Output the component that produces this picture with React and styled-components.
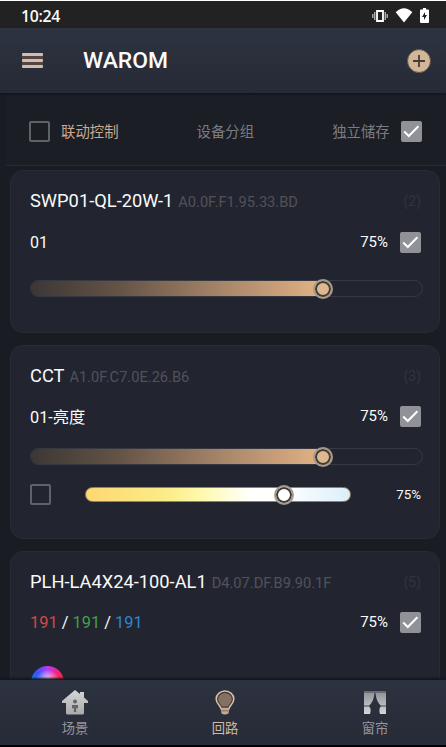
import React from 'react';
import styled, { createGlobalStyle } from 'styled-components';

const Global = createGlobalStyle`
  *{box-sizing:border-box}
  body{margin:0;background:#181b21;overflow:hidden}
`;
const Screen = styled.div`
  width:446px;height:747px;display:flex;flex-direction:column;overflow:hidden;
  background:#191c22;color:#fafafa;border-bottom:2px solid #020202;
  font-family:Roboto,"Noto Sans CJK SC",sans-serif;
`;
const StatusBar = styled.div`
  height:28px;flex:none;display:flex;align-items:center;justify-content:space-between;
  padding:2px 17px 0 21px;background:#222222;border-top:1px solid #fff;
`;
const Clock = styled.span`font:500 15.8px/20px "Open Sans",sans-serif;letter-spacing:-.3px;font-weight:600;`;
const StatusIcons = styled.div`display:flex;align-items:center;gap:7px;`;
const AppBar = styled.header`
  height:65px;flex:none;display:flex;align-items:center;padding:0 15.5px 0 22px;
  background:linear-gradient(#2d3340,#262a36);box-shadow:0 1px 2px #10121a;z-index:1;
`;
const MenuLines = styled.div`
  width:21px;height:15px;display:flex;flex-direction:column;justify-content:space-between;background:#56453e;
`;
const MenuLine = styled.i`height:2.6px;background:#cdbfb5;border-radius:1px;`;
const Title = styled.h1`margin:0 auto 0 40px;font-size:22.9px;line-height:30px;font-weight:500;`;
const AddButton = styled.button`
  width:24px;height:24px;padding:0;border:1px solid #655348;border-radius:50%;background:#d1b797;
  display:grid;place-items:center;
`;
const Filters = styled.div`
  height:73px;flex:none;margin:0 0 4px 6px;padding:5px 24px 0 23px;display:flex;align-items:center;
  background:#1b1e25;border-bottom:1px solid #282c32;
`;
const FilterLabel = styled.span`
  font-size:14.4px;line-height:20px;padding-top:2px;color:${p => p.$active ? '#c9ab93' : '#7b7c81'};
  margin-left:${p => p.$left}px;
`;
const Box = styled.span`
  width:21px;height:21px;flex:none;border-radius:2px;display:grid;place-items:center;
  background:${p => p.$on ? '#919297' : 'transparent'};
  border:${p => p.$on ? 0 : '2px solid #606268'};
  margin-left:${p => p.$left || 0}px;
`;
const List = styled.main`flex:1;min-height:0;overflow:hidden;padding:0 6px 0 10px;display:flex;flex-direction:column;gap:12px;`;
const Card = styled.section`
  height:${p => p.$h}px;flex:none;padding:16px 18px 0 19px;border:1px solid #282b32;border-radius:13px;background:#22252f;
`;
const Head = styled.div`height:28px;display:flex;align-items:center;`;
const Name = styled.h2`margin:0 5px 0 0;font-size:18.3px;font-weight:400;line-height:24px;white-space:nowrap;`;
const Address = styled.span`font-size:14.65px;line-height:20px;padding-top:2px;color:#50525a;white-space:nowrap;`;
const Count = styled.span`margin-left:auto;margin-right:0;font-size:14px;color:#31343d;`;
const Row = styled.div`height:${p => p.$h}px;display:flex;align-items:center;`;
const Channel = styled.span`font-size:${p => p.$size || 16}px;flex:1;`;
const Value = styled.span`font-size:${p => p.$small ? 13.3 : 15}px;margin-left:${p => p.$left || 0}px;`;
const Rgb = styled.span`color:${p => p.$c};`;
const Track = styled.div`
  height:17px;width:393px;border:1px solid #363941;border-radius:9px;margin-top:${p => p.$top}px;display:flex;align-items:center;
`;
const Fill = styled.div`
  width:292px;height:15px;border-radius:8px 0 0 8px;display:flex;align-items:center;justify-content:flex-end;
  background:linear-gradient(90deg,#3c3735,#645346 30%,#a68569 65%,#e3b385);
`;
const Knob = styled.span`
  width:20px;height:20px;flex:none;border-radius:50%;border:2px solid #a79a8c;
  background:${p => p.$bg};box-shadow:inset 0 0 0 2px #3f3b38;margin-right:${p => p.$over || 0}px;
`;
const TempRow = styled.div`height:21px;margin-top:19px;display:flex;align-items:center;`;
const TempTrack = styled.div`
  width:267px;height:15px;margin-left:34px;border-radius:8px;display:flex;align-items:center;padding-left:188px;
  background:linear-gradient(90deg,#fed772,#fbec87 30%,#fffab0 45%,#fffffa 61%,#fff 75%,#dceefa);
  border:1px solid #8b856e;
`;
const Wheel = styled.div`
  width:33px;height:33px;border-radius:50%;margin:18px 0 0 1px;
  background:radial-gradient(circle,#fff 0,transparent 55%),conic-gradient(#b43cf5,#ff2070 50deg,#ff3020 90deg,#ff0,#0f6,#0af 255deg,#2f55ff 310deg,#b43cf5);
`;
const Nav = styled.nav`
  height:65px;flex:none;display:grid;grid-template-columns:150px 150px 150px;background:linear-gradient(#2d3240,#272b37);
  box-shadow:0 -2px 2px #13161c;z-index:1;
`;
const Tab = styled.div`
  display:flex;flex-direction:column;align-items:center;padding-top:10px;color:${p => p.$active ? '#cfb9a5' : '#94969e'};
  font-size:13.3px;line-height:18px;gap:5px;
`;

const Check = () => (
  <svg width="21" height="21" viewBox="0 0 21 21" fill="none" stroke="#fff" strokeWidth="2"><path d="M3.2 10.5 7.8 15 17.4 5.2" /></svg>
);
const Checkbox = ({ on, left }) => <Box $on={on} $left={left}>{on && <Check />}</Box>;

const Vibrate = () => (
  <svg width="16" height="12" viewBox="0 0 16 12"><path d="M5 1h6v10H5z" fill="none" stroke="#fff" strokeWidth="1.8" /><path d="M2.7 2v8M13.3 2v8M.8 4v4M15.2 4v4" stroke="#aaa" strokeWidth="1.4" /></svg>
);
const Wifi = () => (
  <svg width="18" height="15" viewBox="0 0 18 15"><path d="M.7 4.2Q9-3.6 17.3 4.2L9 14.5Z" fill="#fff" /></svg>
);
const Battery = () => (
  <svg width="9" height="15" viewBox="0 0 9 15"><path d="M3 0h3v1.5h2q1 0 1 1V14q0 1-1 1H1q-1 0-1-1V2.500q0-1 1-1h2Z" fill="#fff" /><path d="M5 4 2 9h2v3l3-5H5Z" fill="#222" /></svg>
);
const Plus = () => (
  <svg width="12" height="12" viewBox="0 0 12 12"><path d="M6 0v12M0 6h12" stroke="#493c36" strokeWidth="1.8" /></svg>
);
const House = () => (
  <svg width="26" height="25" viewBox="0 0 26 25">
    <defs><linearGradient id="house" x2="0" y2="1"><stop stopColor="#d5d6d8" /><stop offset="1" stopColor="#aaa" /></linearGradient></defs>
    <path d="M13 0 18 4V2h4v5.500L26 11v2h-4v10q0 1.500-1.500 1.500h-15Q4 24.500 4 23V13H0v-2Z" fill="url(#house)" />
    <circle cx="13" cy="11.500" r="2" fill="#63656b" /><path d="M10 15h6v3.200h-1.800V22h-2.400v-3.800H10Z" fill="#63656b" />
  </svg>
);
const Bulb = () => (
  <svg width="20" height="25" viewBox="0 0 20 25">
    <path d="M6 18.500C5 15 1.200 13.500 1.200 9A8.800 8 0 0 1 18.800 9C18.800 13.500 15 15 14 18.500Z" fill="#39373c" stroke="#d9bea3" strokeWidth="1.600" />
    <path d="M6.800 16.500C6 14 3.200 12.500 3.200 9A6.800 6 0 0 1 16.800 9C16.800 12.500 14 14 13.200 16.500Z" fill="#857162" />
    <path d="M5.500 18h9l-1 5.500q-3.500 2-7 0Z" fill="#c5aa91" /><path d="M6.500 20.800h7" stroke="#7b685c" />
  </svg>
);
const Curtain = () => (
  <svg width="22" height="25" viewBox="0 0 22 25">
    <defs><linearGradient id="curtain" x2="0" y2="1"><stop stopColor="#92959a" /><stop offset="1" stopColor="#d5d6d8" /></linearGradient></defs>
    <path d="M0 2h22" stroke="#696c73" strokeWidth="2" />
    <path d="M0 3h10.500C10 9 8 13 5 16 7 18 7 21 6 24H0ZM22 3H11.500C12 9 14 13 17 16 15 18 15 21 16 24h6Z" fill="url(#curtain)" />
    <path d="M0 16h6M16 16h6" stroke="#444952" />
  </svg>
);

const Slider = ({ top }) => <Track $top={top}><Fill><Knob $bg="#dfb890" $over={-10} /></Fill></Track>;
const Header = ({ name, address, count }) => (
  <Head><Name>{name}</Name><Address>{address}</Address><Count>({count})</Count></Head>
);
const ChannelRow = ({ size, h = 52, children }) => (
  <Row $h={h}><Channel $size={size}>{children}</Channel><Value>75%</Value><Checkbox on left={12} /></Row>
);

export default function App() {
  return (
    <Screen>
      <Global />
      <StatusBar><Clock>10:24</Clock><StatusIcons><Vibrate /><Wifi /><Battery /></StatusIcons></StatusBar>
      <AppBar>
        <MenuLines><MenuLine /><MenuLine /><MenuLine /></MenuLines>
        <Title>WAROM</Title>
        <AddButton aria-label="Add"><Plus /></AddButton>
      </AppBar>
      <Filters>
        <Checkbox />
        <FilterLabel $active $left={11}>联动控制</FilterLabel>
        <FilterLabel $left={78}>设备分组</FilterLabel>
        <FilterLabel $left={78}>独立储存</FilterLabel>
        <Checkbox on left={11} />
      </Filters>
      <List>
        <Card $h={163}>
          <Header name="SWP01-QL-20W-1" address="A0.0F.F1.95.33.BD" count={2} />
          <ChannelRow h={54}>01</ChannelRow>
          <Slider top={11} />
        </Card>
        <Card $h={194}>
          <Header name="CCT" address="A1.0F.C7.0E.26.B6" count={3} />
          <ChannelRow size={16.3}>01-亮度</ChannelRow>
          <Slider top={6} />
          <TempRow><Checkbox /><TempTrack><Knob $bg="#fff" /></TempTrack><Value $small $left={45}>75%</Value></TempRow>
        </Card>
        <Card $h={195}>
          <Header name="PLH-LA4X24-100-AL1" address="D4.07.DF.B9.90.1F" count={5} />
          <ChannelRow size={16.4}><Rgb $c="#d4484b">191</Rgb> / <Rgb $c="#43a047">191</Rgb> / <Rgb $c="#2e86cf">191</Rgb></ChannelRow>
          <Wheel />
        </Card>
      </List>
      <Nav>
        <Tab><House />场景</Tab>
        <Tab $active><Bulb />回路</Tab>
        <Tab><Curtain />窗帘</Tab>
      </Nav>
    </Screen>
  );
}
